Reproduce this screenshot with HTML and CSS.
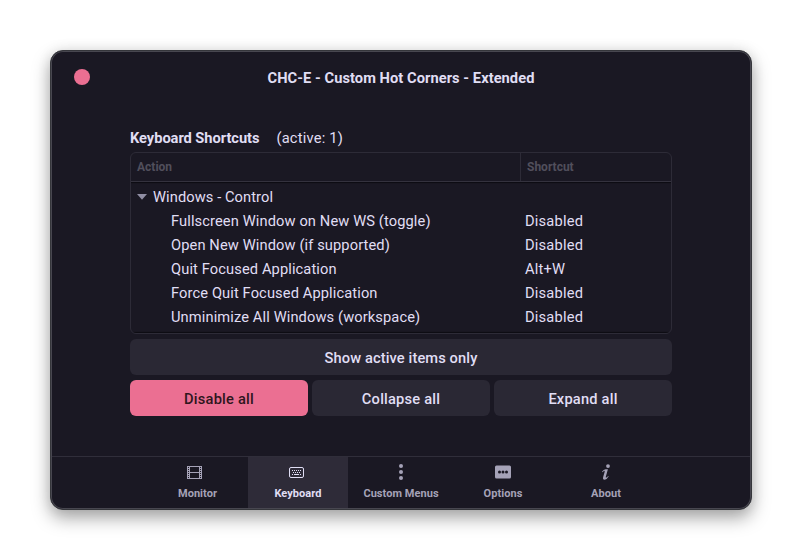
FILE: index.html
```html
<!DOCTYPE html>
<html lang="en">
<head>
<meta charset="utf-8">
<title>CHC-E - Custom Hot Corners - Extended</title>
<link rel="stylesheet" href="styles.css">
</head>
<body>
<main class="window">
  <header class="titlebar">
    <button class="close" aria-label="Close"></button>
    <h1 class="title">CHC-E - Custom Hot Corners - Extended</h1>
  </header>
  <section class="content">
    <div class="heading"><h2>Keyboard Shortcuts</h2><span>(active: 1)</span></div>
    <div class="tree">
      <div class="tree-head"><div>Action</div><div>Shortcut</div></div>
      <div class="tree-body">
        <div class="row group"><span><svg class="arrow" width="11" height="6" viewBox="0 0 11 6"><path d="M0 0h10L5 5.700z"/></svg>Windows - Control</span></div>
        <div class="row"><span>Fullscreen Window on New WS (toggle)</span><span>Disabled</span></div>
        <div class="row"><span>Open New Window (if supported)</span><span>Disabled</span></div>
        <div class="row"><span>Quit Focused Application</span><span>Alt+W</span></div>
        <div class="row"><span>Force Quit Focused Application</span><span>Disabled</span></div>
        <div class="row"><span>Unminimize All Windows (workspace)</span><span>Disabled</span></div>
      </div>
    </div>
    <button class="btn wide">Show active items only</button>
    <div class="buttons">
      <button class="btn destructive">Disable all</button>
      <button class="btn">Collapse all</button>
      <button class="btn">Expand all</button>
    </div>
  </section>
  <nav class="tabs">
    <div class="tab monitor">
      <svg width="16" height="16" viewBox="0 0 16 16"><path fill-rule="evenodd" d="M0 2h15v13H0zM3 3v5h9V3zM3 9v5h9V9zM1 3v1h1V3zM1 5v1h1V5zM1 7v1h1V7zM1 9v1h1V9zM1 11v1h1v-1zM1 13v1h1v-1zM13 3v1h1V3zM13 5v1h1V5zM13 7v1h1V7zM13 9v1h1V9zM13 11v1h1v-1zM13 13v1h1v-1z"/></svg>
      <span>Monitor</span>
    </div>
    <div class="tab keyboard active">
      <svg width="16" height="16" viewBox="0 0 16 16"><rect x=".5" y="3.500" width="14" height="10" rx="1.500" fill="none" stroke="currentColor"/><path d="M3 6h1v1H3zM5 6h1v1H5zM7 6h1v1H7zM9 6h1v1H9zM11 6h1v1h-1zM4 8h1v1H4zM6 8h1v1H6zM8 8h1v1H8zM10 8h1v1h-1zM3 10h1v1H3zM5 10h5v1H5zM11 10h1v1h-1z"/></svg>
      <span>Keyboard</span>
    </div>
    <div class="tab">
      <svg width="16" height="16" viewBox="0 0 16 16"><circle cx="8" cy="2" r="2"/><circle cx="8" cy="8" r="2"/><circle cx="8" cy="14" r="2"/></svg>
      <span>Custom Menus</span>
    </div>
    <div class="tab">
      <svg width="16" height="16" viewBox="0 0 16 16"><path fill-rule="evenodd" d="M1.500 1.500h13Q16 1.500 16 3v10q0 1.500-1.500 1.500h-13Q0 14.500 0 13V3q0-1.500 1.500-1.500zM3 8a1.500 1.500 0 1 0 3 0 1.500 1.500 0 1 0-3 0zM6.500 8a1.500 1.500 0 1 0 3 0 1.500 1.500 0 1 0-3 0zM10 8a1.500 1.500 0 1 0 3 0 1.500 1.500 0 1 0-3 0z"/></svg>
      <span>Options</span>
    </div>
    <div class="tab">
      <svg width="16" height="16" viewBox="0 0 16 16"><circle cx="10" cy="2.100" r="1.900"/><path d="M9.900 5.200 7.800 12.700q-.2 1 .4.900.8-.1 1.900-1.700l.6.400Q8.700 15.800 6.700 15.800q-2.200 0-1.600-2.500L6.600 8q.4-1.300-.3-1.300-.8.100-1.700 1.500L4 7.800q1.700-2.400 3.500-2.500z"/></svg>
      <span>About</span>
    </div>
  </nav>
</main>
</body>
</html>
```

FILE: styles.css
```css
* { box-sizing: border-box; }

body {
  margin: 0;
  padding: 50px;
  height: 560px;
  overflow: hidden;
  background: #fff;
  color: #e0def4;
  font: 14.67px/24px Roboto, sans-serif;
  letter-spacing: 0.11px;
}

h1, h2 { margin: 0; font-size: inherit; font-weight: 700; }

button { border: 0; padding: 0; font: inherit; letter-spacing: inherit; color: inherit; }

.window {
  height: 460px;
  display: flex;
  flex-direction: column;
  border: 1px solid #35363b;
  border-radius: 13px;
  background: #1a1823;
  box-shadow: inset 0 0 0 1px #484750, 0 8px 18px rgba(0, 0, 0, 0.35), 0 0 14px rgba(0, 0, 0, 0.08);
}

.titlebar {
  height: 52px;
  padding: 0 23px;
  display: grid;
  grid-template-columns: 16px 1fr 16px;
  align-items: center;
}

.close { width: 16px; height: 16px; border-radius: 50%; background: #eb6f92; }

.title { padding-top: 2px; text-align: center; line-height: 24px; letter-spacing: 0.05px; }

.content { width: 542px; margin: 23px auto 0; }

.heading { display: flex; gap: 17px; height: 26px; line-height: 24px; }
.heading h2 { letter-spacing: -0.05px; }
.heading span { letter-spacing: 0.2px; }

.tree {
  height: 182px;
  border: 1px solid #2d2b37;
  border-radius: 6px;
  overflow: hidden;
}

.tree-head {
  display: grid;
  grid-template-columns: 390px 1fr;
  height: 29px;
  border-bottom: 1px solid #34323e;
  font-size: 12px;
  font-weight: 700;
  line-height: 28px;
  letter-spacing: 0;
  color: #514f5c;
}

.tree-head div { padding-left: 6px; }
.tree-head div:first-child { border-right: 1px solid #2d2b37; }

.tree-body {
  height: 151px;
  padding-top: 3px;
  box-shadow: inset 0 2px 1px -1px #0d0c12, inset 0 -2px 1px -1px #0d0c12;
}

.row {
  height: 24px;
  display: grid;
  grid-template-columns: 354px 1fr;
  padding-left: 40px;
}

.row span + span { letter-spacing: 0.2px; }
.row.group { padding-left: 6px; letter-spacing: 0.08px; }

.arrow { margin-right: 5px; vertical-align: 2px; fill: #908ea4; }

.btn {
  height: 36px;
  padding-top: 2px;
  border-radius: 6px;
  background: #2a2834;
  font-weight: 500;
}

.wide { width: 100%; margin-top: 5px; display: block; }

.buttons {
  display: grid;
  grid-template-columns: repeat(3, 1fr);
  gap: 4px;
  margin-top: 5px;
  letter-spacing: 0.2px;
}

.destructive { background: #eb6f92; color: #2f161d; }

.tabs {
  height: 53px;
  margin: auto 1px 0;
  padding-left: 95px;
  display: grid;
  grid-template-columns: 101px 100px 106px 98px 108px;
  border-top: 1px solid #302e3a;
}

.tab {
  height: 51px;
  display: flex;
  flex-direction: column;
  align-items: center;
  padding-top: 7px;
  color: #a5a2b7;
  font-size: 11px;
  font-weight: 700;
  line-height: 16px;
  letter-spacing: 0.05px;
}

.tab svg { display: block; margin-bottom: 6px; fill: currentColor; }
.tab.monitor svg { margin-right: 5px; }
.tab.keyboard svg { margin-right: 2px; }
.tab.active { background: #2e2b38; color: #e0def4; }
```
